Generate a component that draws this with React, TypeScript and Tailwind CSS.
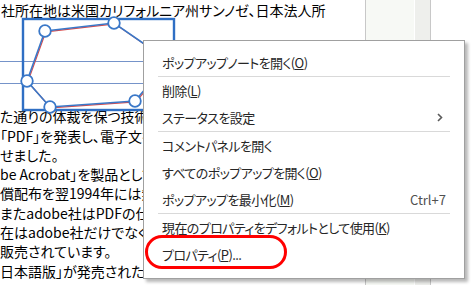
import { ReactNode } from 'react'

const docLines = [
    'た通りの体裁を保つ技術「PDF」を開発しました。',
    '「PDF」を発表し、電子文書の標準化を目指しま',
    'せました。',
    'be Acrobat」を製品として発売しました。',
    '償配布を翌1994年には無償化しました。',
    'またadobe社はPDFの仕様を公開しました。',
    '在はadobe社だけでなく多くの会社から',
    '販売されています。',
    '日本語版」が発売された1997年からはよく使われるようになっています。',
]

type Item = { label: ReactNode; shortcut?: string; submenu?: boolean }

const groups: Item[][] = [
    [{ label: <>ポップアップノートを開く(<u>O</u>)</> }],
    [
        { label: <>削除(<u>L</u>)</> },
        { label: 'ステータスを設定', submenu: true },
    ],
    [
        { label: 'コメントパネルを開く' },
        { label: <>すべてのポップアップを開く(<u>O</u>)</> },
        { label: <>ポップアップを最小化(<u>M</u>)</>, shortcut: 'Ctrl+7' },
    ],
    [
        { label: <>現在のプロパティをデフォルトとして使用(<u>K</u>)</> },
        { label: <>プロパティ(<u>P</u>)...</> },
    ],
]

function PolygonAnnotation() {
    const pts: [number, number][] = [
        [45, 31],
        [114, 23],
        [169, 61],
        [135, 101],
        [50, 107],
        [27, 81],
    ]
    const poly = pts.map(p => p.join(',')).join(' ')
    const polyRed = pts.map(([x, y]) => `${x + 0.8},${y + 0.8}`).join(' ')
    return (
        <svg className="absolute left-0 top-0 pointer-events-none" width="475" height="285">
            <polygon points={polyRed} fill="none" stroke="#d94a4a" strokeWidth="1.2" />
            <polygon points={poly} fill="none" stroke="#3a78c8" strokeWidth="1.6" />
            <rect x="23" y="19" width="151" height="91" fill="none" stroke="#2f6fc4" strokeWidth="2.4" />
            {pts.map(([x, y], i) => (
                <circle key={i} cx={x} cy={y} r="5.8" fill="white" stroke="#3a78c8" strokeWidth="1.8" />
            ))}
        </svg>
    )
}

function ContextMenu() {
    return (
        <div className="absolute left-[143px] top-[40px] w-[322px] h-[239px] bg-white border border-[#a0a0a0] shadow-[3px_3px_3px_rgba(0,0,0,0.28)] pt-[8px] text-[13px] tracking-[-0.6px] text-[#262626] [font-feature-settings:'palt']">
            {groups.map((group, gi) => (
                <div key={gi}>
                    {gi > 0 && <div className="h-px mx-[14px] bg-[#d9d9d9]" />}
                    {group.map((item, ii) => (
                        <div key={ii} className="h-[27px] flex items-center justify-between pl-[18px] pr-[18px]">
                            <span className="whitespace-nowrap">{item.label}</span>
                            {item.shortcut && <span className="text-[#505050] tracking-normal">{item.shortcut}</span>}
                            {item.submenu && (
                                <svg width="6" height="9" viewBox="0 0 6 9" className="mr-[3px]">
                                    <polyline points="1,1 4.5,4.5 1,8" fill="none" stroke="#5a5a5a" strokeWidth="1.6" />
                                </svg>
                            )}
                        </div>
                    ))}
                </div>
            ))}
        </div>
    )
}

export default function App() {
    return (
        <div className="relative w-[475px] h-[285px] overflow-hidden bg-white font-['Noto_Sans_CJK_JP','Noto_Sans',sans-serif]">
            {/* Document page */}
            <div className="flex h-full">
                <div className="w-[365px] overflow-hidden whitespace-nowrap text-[14px] leading-[19.3px] text-black pt-[1px] [font-feature-settings:'palt']">
                    <div className="pl-px">社所在地は米国カリフォルニア州サンノゼ、日本法人所</div>
                    <div className="h-[87px] flex flex-col">
                        <div className="h-[41px]" />
                        <div className="h-px bg-[#7593c9]" />
                        <div className="h-[21px]" />
                        <div className="h-px bg-[#7593c9]" />
                    </div>
                    {docLines.map((line, i) => (
                        <div key={i}>{line}</div>
                    ))}
                </div>
                <div className="w-[66px] flex border-x border-[#c8c8c8]">
                    <div className="flex-1 bg-[#f7f9f5]" />
                    <div className="w-[16px] bg-[#eeefec] border-l border-white" />
                </div>
                <div className="flex-1" />
            </div>

            <PolygonAnnotation />
            <ContextMenu />

            {/* Red highlight around "プロパティ" */}
            <div className="absolute left-[145px] top-[235px] w-[142px] h-[34px] rounded-[17px] border-[3.5px] border-[#ff0000]" />
        </div>
    )
}
